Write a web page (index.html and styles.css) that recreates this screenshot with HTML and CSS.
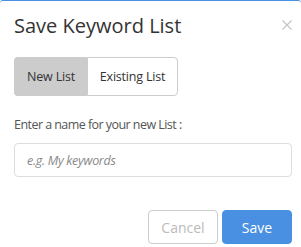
FILE: index.html
```html
<!DOCTYPE html>
<html>
<head>
<meta charset="utf-8">
<link rel="stylesheet" href="styles.css">
</head>
<body>
<div class="modal">
  <div class="header">
    <h2 class="title">Save Keyword List</h2>
    <svg class="close" width="10" height="10" viewBox="0 0 10 10" aria-label="Close">
      <path d="M0.5 0.5 L9.5 9.5 M9.5 0.5 L0.5 9.5" stroke="#c4c4c4" stroke-width="1.2" fill="none"/>
    </svg>
  </div>
  <div class="toggle">
    <button class="tbtn active">New List</button>
    <button class="tbtn">Existing List</button>
  </div>
  <label class="label">Enter a name for your new List :</label>
  <input class="input" type="text" placeholder="e.g. My keywords">
  <div class="footer">
    <button class="btn cancel">Cancel</button>
    <button class="btn save">Save</button>
  </div>
</div>
</body>
</html>
```
FILE: styles.css
```css
html, body { margin: 0; padding: 0; background: #fff; }
body { font-family: "Open Sans", sans-serif; width: 301px; height: 247px; overflow: hidden; }
.modal {
  border-top: 1px solid #4a90e2;
  border-radius: 3px 3px 0 0;
  padding: 11px 9px 0 14px;
  box-sizing: border-box;
  height: 247px;
}
.header { display: flex; justify-content: space-between; align-items: flex-start; }
.title { margin: 0; font-size: 20px; font-weight: 400; color: #333; line-height: 27px; }
.close { margin-top: 8px; margin-right: 0; }
.toggle { display: flex; margin-top: 18px; width: 164px; }
.tbtn {
  font-family: inherit; font-size: 12.5px; letter-spacing: -0.2px; color: #333; background: #fff;
  border: 1px solid #ccc; height: 39px; padding: 0; margin: 0;
}
.tbtn.active { background: #ccc; border-radius: 4px 0 0 4px; border-right: none; width: 73px; }
.tbtn:last-child { border-radius: 0 4px 4px 0; flex: 1; }
.label { display: block; margin-top: 20px; font-size: 12.5px; letter-spacing: -0.55px; color: #555; line-height: 18px; }
.input {
  display: block; box-sizing: border-box; width: 278px; height: 34px; margin-top: 9px;
  border: 1px solid #ddd; border-radius: 4px; padding: 0 12px;
  font-family: inherit; font-size: 12.5px; letter-spacing: -0.3px; outline: none;
}
.input::placeholder { color: #888; font-style: italic; }
.footer { display: flex; justify-content: flex-end; gap: 4px; margin-top: 33px; }
.btn {
  font-family: inherit; font-size: 14px; height: 34px; width: 70px; border-radius: 4px; margin: 0;
}
.cancel { background: #fff; border: 1px solid #ccc; color: #bbb; }
.save { background: #4a90e2; border: 1px solid #4a90e2; color: #fff; }
```
